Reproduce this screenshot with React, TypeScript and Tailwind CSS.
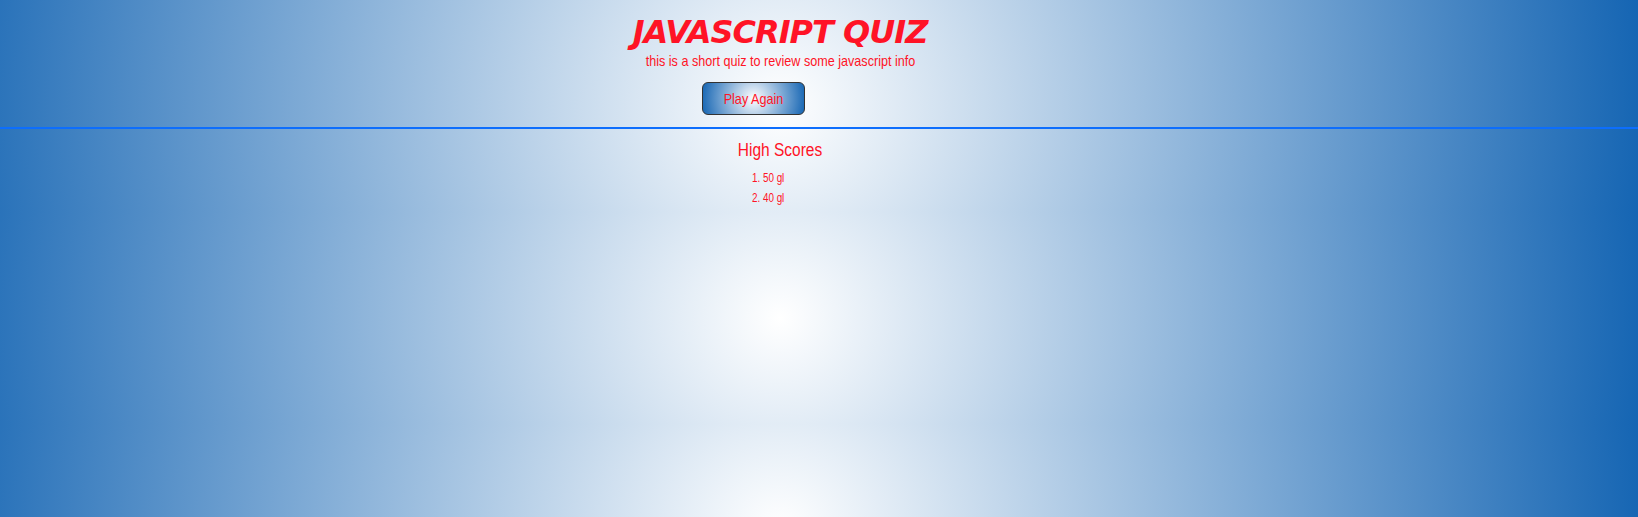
import React from 'react';

const scores = [
  { score: 50, initials: 'gl' },
  { score: 40, initials: 'gl' },
];

const App: React.FC = () => {
  return (
    <div className="min-h-screen bg-[radial-gradient(circle_at_780px_106px,#ffffff,#1565b3)] bg-[length:100%_212px] bg-repeat-y font-['Liberation_Sans',Arial,sans-serif] text-[#ff1326]">
      {/* Header */}
      <header className="border-b-2 border-[#0d6efd] pt-[13px] pb-[12px]">
        <div className="w-[1560px] flex flex-col items-center">
          <h1 className="font-['DejaVu_Sans',Verdana,sans-serif] font-bold italic text-[32px] leading-[38px] tracking-[-1px]">
            JAVASCRIPT QUIZ
          </h1>
          <p className="text-[15px] leading-[20px]">
            <span className="inline-block scale-x-[0.84]">this is a short quiz to review some javascript info</span>
          </p>
          <button className="mt-[11px] mr-[53px] w-[103px] h-[33px] py-[5px] text-[15px] leading-[21px] text-[#ff1326] rounded-[6px] border border-[#333] bg-[radial-gradient(circle,#ffffff,#1565b3)]">
            <span className="inline-block scale-x-[0.84]">Play Again</span>
          </button>
        </div>
      </header>

      {/* High scores */}
      <section className="w-[1560px] flex flex-col items-center pt-[9px]">
        <h2 className="text-[18px] leading-[24px]">
          <span className="inline-block scale-x-[0.86]">High Scores</span>
        </h2>
        <ol className="mt-[6px] mr-[16px] list-decimal list-inside text-[12px] leading-[20px] scale-x-[0.82] origin-left">
          {scores.map((s, i) => (
            <li key={i}>
              {s.score} {s.initials}
            </li>
          ))}
        </ol>
      </section>
    </div>
  );
};

export default App;
